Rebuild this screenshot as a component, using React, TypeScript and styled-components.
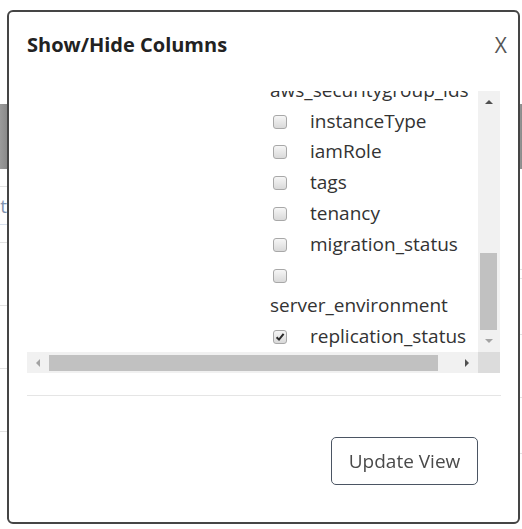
import React from 'react';
import styled, { createGlobalStyle } from 'styled-components';

const GlobalStyle = createGlobalStyle`
  html, body {
    margin: 0;
    padding: 0;
    background: #fff;
  }
  body {
    font-family: "Open Sans", "Liberation Sans", sans-serif;
    overflow: hidden;
  }
`;

// page behind the dialog, only its edges show
const Page = styled.div`
  width: 522px;
  height: 529px;
  display: flex;
  justify-content: space-between;
`;

const Strip = styled.div<{ $w: number }>`
  width: ${(p) => p.$w}px;
  padding-top: 104px;
  display: flex;
  flex-direction: column;
  overflow: hidden;
`;

const HeadBand = styled.div`
  height: 65px;
  background: linear-gradient(90deg, #9a9a9a, #8a8a8a);
  flex-shrink: 0;
`;

const BgRow = styled.div<{ $h: number; $line?: string }>`
  height: ${(p) => p.$h}px;
  flex-shrink: 0;
  border-bottom: 1px solid ${(p) => p.$line || '#e2e2e2'};
  display: flex;
  justify-content: flex-end;
  align-items: center;
  white-space: nowrap;
  font-size: 19px;
  color: #7f93b0;
`;

// dialog
const Dialog = styled.div`
  position: fixed;
  left: 7px;
  top: 10px;
  width: 513px;
  height: 514px;
  box-sizing: border-box;
  border: 2px solid #454545;
  border-radius: 6px;
  background: #fff;
  display: flex;
  flex-direction: column;
`;

const Header = styled.div`
  display: flex;
  justify-content: space-between;
  align-items: center;
  padding: 18px 11px 0 18px;
`;

const Title = styled.h4`
  margin: 0;
  font-size: 20px;
  line-height: 30px;
  font-weight: 700;
  color: #222;
`;

const Close = styled.button`
  border: none;
  background: none;
  padding: 0;
  font-family: inherit;
  font-size: 21px;
  line-height: 30px;
  font-weight: 400;
  color: #555;
  cursor: pointer;
`;

const Body = styled.div`
  padding: 31px 17px 0 18px;
`;

const ScrollBox = styled.div`
  display: grid;
  grid-template-columns: 451px 22px;
  grid-template-rows: 261px 21px;
`;

const Viewport = styled.div`
  overflow: hidden;
  display: flex;
  flex-direction: column;
  justify-content: flex-end;
`;

const List = styled.div`
  flex-shrink: 0;
  margin-left: 243px;
  width: 208px;
  font-size: 19px;
  line-height: 30.8px;
  color: #333;
`;

const Item = styled.label`
  display: block;
`;

const Box = styled.span`
  display: inline-block;
  box-sizing: border-box;
  width: 14px;
  height: 14px;
  margin: 0 23px 0 3px;
  vertical-align: middle;
  position: relative;
  top: -1px;
  border: 1px solid #a8a8a8;
  border-radius: 3px;
  background: linear-gradient(#f6f6f6, #d9d9d9);
  svg {
    display: block;
  }
`;

const VBar = styled.div`
  background: #f1f1f1;
  display: flex;
  flex-direction: column;
`;

const HBar = styled.div`
  background: #f1f1f1;
  display: flex;
`;

const ArrowCell = styled.div`
  width: 22px;
  height: 22px;
  flex-shrink: 0;
  display: flex;
  align-items: center;
  justify-content: center;
`;

const HArrowCell = styled(ArrowCell)`
  height: 21px;
`;

const Arrow = styled.span<{ $dir: 'up' | 'down' | 'left' | 'right'; $dim?: boolean }>`
  width: 0;
  height: 0;
  border: 4px solid transparent;
  ${(p) => {
    const c = p.$dim ? '#a3a3a3' : '#505050';
    if (p.$dir === 'up') return `border-bottom-color: ${c}; border-top-width: 0;`;
    if (p.$dir === 'down') return `border-top-color: ${c}; border-bottom-width: 0;`;
    if (p.$dir === 'left') return `border-right-color: ${c}; border-left-width: 0;`;
    return `border-left-color: ${c}; border-right-width: 0;`;
  }}
`;

const VTrack = styled.div`
  flex: 1;
  display: flex;
  flex-direction: column;
  justify-content: flex-end;
  align-items: center;
`;

const VThumb = styled.div`
  width: 17px;
  height: 77px;
  margin-right: 1px;
  background: #c1c1c1;
`;

const HTrack = styled.div`
  flex: 1;
  display: flex;
  align-items: center;
`;

const HThumb = styled.div`
  width: 389px;
  height: 16px;
  background: #c1c1c1;
`;

const Corner = styled.div`
  background: #dcdcdc;
`;

const Divider = styled.hr`
  margin: 22px 17px 0 18px;
  border: none;
  border-top: 1px solid #e5e5e5;
`;

const Footer = styled.div`
  display: flex;
  justify-content: flex-end;
  padding: 41px 40px 0 18px;
`;

const UpdateButton = styled.button`
  width: 147px;
  height: 48px;
  box-sizing: border-box;
  border: 1.5px solid #4b5563;
  border-radius: 5px;
  background: #fff;
  font-family: inherit;
  font-size: 19px;
  color: #4a4a4a;
  cursor: pointer;
`;

const columns: { name: string; checked?: boolean }[] = [
  { name: 'hostname' },
  { name: 'ip_address' },
  { name: 'os_type' },
  { name: 'vpc_id' },
  { name: 'subnet_id' },
  { name: 'aws_securitygroup_ids' },
  { name: 'instanceType' },
  { name: 'iamRole' },
  { name: 'tags' },
  { name: 'tenancy' },
  { name: 'migration_status' },
  { name: 'server_environment' },
  { name: 'replication_status', checked: true },
];

const Check: React.FC<{ checked?: boolean }> = ({ checked }) => (
  <Box>
    {checked && (
      <svg width="12" height="12" viewBox="0 0 12 12">
        <path d="M2.6 6.2 L5 8.6 L9.6 2.8" fill="none" stroke="#2b2b2b" strokeWidth="2" />
      </svg>
    )}
  </Box>
);

export default function App() {
  return (
    <>
      <GlobalStyle />
      <Page>
        <Strip $w={7}>
          <HeadBand />
          <BgRow $h={17} />
          <BgRow $h={37} $line="#d6e0ee">Default</BgRow>
          <BgRow $h={17} />
          <BgRow $h={62} />
          <BgRow $h={62} />
          <BgRow $h={62} />
        </Strip>
        <Strip $w={3}>
          <HeadBand />
          <BgRow $h={100} />
          <BgRow $h={8} />
          <BgRow $h={55} />
          <BgRow $h={62} />
          <BgRow $h={55} />
        </Strip>
      </Page>
      <Dialog>
        <Header>
          <Title>Show/Hide Columns</Title>
          <Close>X</Close>
        </Header>
        <Body>
          <ScrollBox>
            <Viewport>
              <List>
                {columns.map((c) => (
                  <Item key={c.name}>
                    <Check checked={c.checked} />
                    {c.name}
                  </Item>
                ))}
              </List>
            </Viewport>
            <VBar>
              <ArrowCell>
                <Arrow $dir="up" />
              </ArrowCell>
              <VTrack>
                <VThumb />
              </VTrack>
              <ArrowCell>
                <Arrow $dir="down" $dim />
              </ArrowCell>
            </VBar>
            <HBar>
              <HArrowCell>
                <Arrow $dir="left" $dim />
              </HArrowCell>
              <HTrack>
                <HThumb />
              </HTrack>
              <HArrowCell>
                <Arrow $dir="right" />
              </HArrowCell>
            </HBar>
            <Corner />
          </ScrollBox>
        </Body>
        <Divider />
        <Footer>
          <UpdateButton>Update View</UpdateButton>
        </Footer>
      </Dialog>
    </>
  );
}
